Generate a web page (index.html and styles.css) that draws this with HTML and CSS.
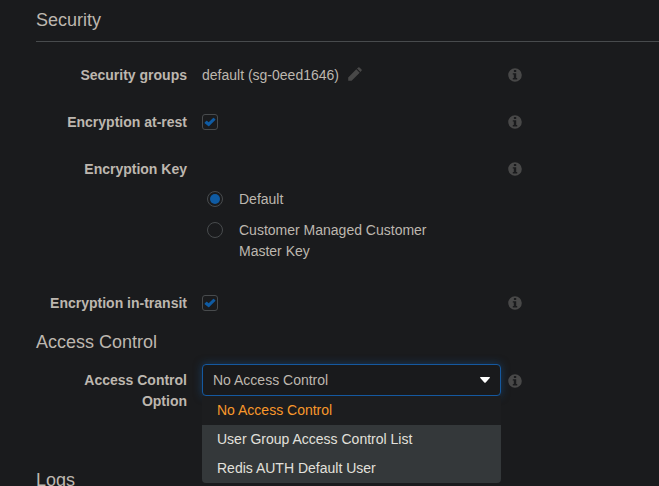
FILE: index.html
```html
<!DOCTYPE html>
<html lang="en">
<head>
<meta charset="utf-8">
<title>Security settings</title>
<link rel="stylesheet" href="styles.css">
</head>
<body>
<svg class="sprite" aria-hidden="true">
  <symbol id="info" viewBox="0 0 14 14"><path fill-rule="evenodd" d="M7 .2a6.8 6.8 0 1 1 0 13.6A6.8 6.8 0 0 1 7 .2ZM5.9 2v2h2.3v-2ZM4.8 5.2v1.3h1v3.6h-1v1.4h4.4v-1.4h-1V5.2Z"/></symbol>
  <symbol id="check" viewBox="0 0 12 10"><path d="M.7 5.5 2.4 3.8Q2.8 3.5 3.2 3.9L4.7 5.3 9.1 .9Q9.5 .5 9.9 .9L11.3 2.3Q11.6 2.7 11.3 3L5.2 9.1Q4.7 9.5 4.2 9.1L.7 6.2Q.4 5.9 .7 5.5Z"/></symbol>
  <symbol id="pencil" viewBox="0 0 14 14"><path d="M.2 13.8V10.4L8.3 2.3 11.7 5.7 3.6 13.8ZM9 1.6 10.2.5Q10.9-.1 11.5.5L13.5 2.5Q14.1 3.1 13.5 3.8L12.4 5Z"/></symbol>
</svg>
<main class="page">
  <h2 class="heading ruled">Security</h2>
  <div class="row groups"><div class="label">Security groups</div><div class="field">default (sg-0eed1646)<svg class="pencil"><use href="#pencil"/></svg></div><svg class="info"><use href="#info"/></svg></div>
  <div class="row rest"><div class="label">Encryption at-rest</div><div class="field"><span class="checkbox"><svg><use href="#check"/></svg></span></div><svg class="info"><use href="#info"/></svg></div>
  <div class="row key"><div class="label">Encryption Key</div><div class="field"></div><svg class="info"><use href="#info"/></svg></div>
  <div class="options">
    <div class="option"><span class="radio selected"></span><span>Default</span></div>
    <div class="option"><span class="radio"></span><span>Customer Managed Customer<br>Master Key</span></div>
  </div>
  <div class="row transit"><div class="label">Encryption in-transit</div><div class="field"><span class="checkbox"><svg><use href="#check"/></svg></span></div><svg class="info"><use href="#info"/></svg></div>
  <h2 class="heading access">Access Control</h2>
  <div class="row control">
    <div class="label">Access Control<br>Option</div>
    <div class="field select-wrap">
      <div class="select"><span>No Access Control</span><svg class="caret" viewBox="0 0 10 6"><path d="M.6 0H9.4Q10.3 .4 9.7 1L5.7 5.4Q5 6 4.3 5.4L.3 1Q-.3 .4 .6 0Z"/></svg></div>
      <ul class="menu"><li class="active">No Access Control</li><li>User Group Access Control List</li><li>Redis AUTH Default User</li></ul>
    </div>
    <svg class="info"><use href="#info"/></svg>
  </div>
  <h2 class="heading logs">Logs</h2>
</main>
</body>
</html>
```
FILE: styles.css
```css
* { box-sizing: border-box; }
html, body { height: 100%; }
body { margin: 0; overflow: hidden; background: #1a1b1d; color: #bdb7af; font: 14px/21px "Liberation Sans", Arial, sans-serif; }
.sprite { position: absolute; width: 0; height: 0; }
.page { height: 486px; padding-left: 36px; overflow: hidden; }
.heading { margin: 0; font-size: 18px; font-weight: 400; line-height: 22px; }
.ruled { height: 42px; padding-top: 9px; border-bottom: 1px solid #484b4d; }
.row { display: grid; grid-template-columns: 166px 306px 14px; align-items: start; }
.label { padding-right: 15px; font-weight: 700; text-align: right; }
.field { min-height: 21px; display: flex; align-items: flex-start; }
.info { width: 14px; height: 14px; margin-top: 3px; fill: #484848; }
.pencil { width: 14px; height: 14px; margin: 2px 0 0 9px; fill: #484848; }
.groups { margin-top: 23px; }
.rest, .key { margin-top: 26px; }
.checkbox { width: 16px; height: 16px; margin-top: 2px; display: grid; place-items: center; border: 1px solid #484b4d; border-radius: 3px; }
.checkbox svg { width: 12px; height: 10px; fill: #0f5ba3; }
.options { margin: 9px 0 0 171px; }
.option { display: grid; grid-template-columns: 16px 250px; column-gap: 16px; }
.option + .option { margin-top: 10px; }
.radio { width: 16px; height: 16px; margin-top: 2px; border: 1px solid #484b4d; border-radius: 50%; display: grid; place-items: center; }
.selected::after { content: ""; width: 10px; height: 10px; border-radius: 50%; background: #0f5ba3; }
.transit { margin-top: 31px; }
.access { margin-top: 17px; }
.control { margin-top: 11px; }
.control .label { padding-top: 6px; }
.control .info { margin-top: 10px; }
.select-wrap { position: relative; width: 299px; }
.select { width: 299px; height: 32px; padding: 0 10px; display: flex; align-items: center; justify-content: space-between; border: 1px solid #1559a0; border-radius: 4px; box-shadow: 0 0 8px rgba(21, 89, 160, .5); background: #191a1c; }
.caret { width: 10px; height: 6px; fill: #fff; }
.menu { position: absolute; z-index: 1; left: 0; top: 32px; width: 299px; margin: 0; padding: 0; list-style: none; background: #34383a; color: #e2e0dc; border-radius: 0 0 4px 4px; overflow: hidden; }
.menu li { height: 29px; padding: 4px 15px; }
.menu .active { background: #1c1d1f; color: #f9982b; }
.logs { margin-top: 57px; }
```
